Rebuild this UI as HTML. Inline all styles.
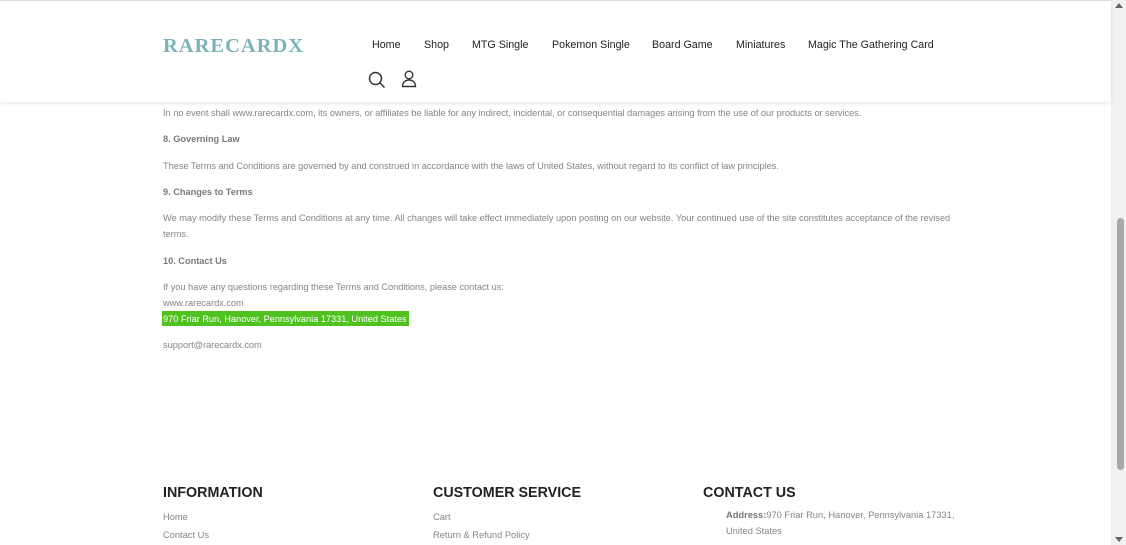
<!DOCTYPE html>
<html><head><meta charset="utf-8"><style>
*{margin:0;padding:0;box-sizing:border-box}
html,body{width:1126px;height:545px;overflow:hidden;background:#fff;font-family:"Liberation Sans",sans-serif}
.hdr{position:absolute;left:0;top:0;width:1111px;height:102px;background:#fff;box-shadow:0 2px 4px rgba(0,0,0,.08);border-top:1px solid #ddd;z-index:2}
.logo{position:absolute;left:163px;top:34px;font-family:"Liberation Serif",serif;font-size:20.5px;letter-spacing:1px;color:#7bb3ba;font-weight:bold}
.nav{position:absolute;top:38px;font-size:10.7px;color:#222}
.t{position:absolute;left:163px;font-size:9.25px;color:#858585;white-space:nowrap;letter-spacing:-.03px}
.b{font-weight:bold;color:#7a7a7a}
.hl{background:#4fc21f;color:#fff;padding:3px 2px 2px 1px;left:162px}
.fh{position:absolute;top:485px;font-size:14.3px;font-weight:bold;color:#222}
.fl{position:absolute;font-size:9.3px;color:#858585}
.sb{position:absolute;left:1111px;top:0;width:15px;height:545px;background:#f1f1f1}
.th{position:absolute;left:1117px;top:218px;width:7px;height:252px;background:#a8a8a8;border-radius:4px}
</style></head><body>
<div class="hdr">
<div class="logo">RARECARDX</div>
<div class="nav" style="left:372px">Home</div>
<div class="nav" style="left:424px">Shop</div>
<div class="nav" style="left:472px">MTG Single</div>
<div class="nav" style="left:552px">Pokemon Single</div>
<div class="nav" style="left:652px">Board Game</div>
<div class="nav" style="left:736px">Miniatures</div>
<div class="nav" style="left:808px">Magic The Gathering Card</div>
<svg style="position:absolute;left:368px;top:70px" width="18" height="18" viewBox="0 0 18 18" fill="none" stroke="#333" stroke-width="1.5"><circle cx="7.5" cy="7.5" r="6"/><path d="M12 12l4.5 4.5"/></svg>
<svg style="position:absolute;left:401px;top:69px" width="16" height="18" viewBox="0 0 16 18" fill="none" stroke="#333" stroke-width="1.4"><circle cx="8" cy="5" r="3.8"/><path d="M1.5 16.5c0-4 3-6.5 6.5-6.5s6.5 2.5 6.5 6.5z"/></svg>
</div>
<div class="t" style="top:108px">In no event shall www.rarecardx.com, its owners, or affiliates be liable for any indirect, incidental, or consequential damages arising from the use of our products or services.</div>
<div class="t b" style="top:134px">8. Governing Law</div>
<div class="t" style="top:161px">These Terms and Conditions are governed by and construed in accordance with the laws of United States, without regard to its conflict of law principles.</div>
<div class="t b" style="top:187px">9. Changes to Terms</div>
<div class="t" style="top:213px">We may modify these Terms and Conditions at any time. All changes will take effect immediately upon posting on our website. Your continued use of the site constitutes acceptance of the revised</div>
<div class="t" style="top:229px">terms.</div>
<div class="t b" style="top:256px">10. Contact Us</div>
<div class="t" style="top:282px">If you have any questions regarding these Terms and Conditions, please contact us:</div>
<div class="t" style="top:298px">www.rarecardx.com</div>
<div class="t hl" style="top:311px">970 Friar Run, Hanover, Pennsylvania 17331, United States</div>
<div class="t" style="top:340px">support@rarecardx.com</div>
<div class="fh" style="left:163px">INFORMATION</div>
<div class="fh" style="left:433px">CUSTOMER SERVICE</div>
<div class="fh" style="left:703px">CONTACT US</div>
<div class="fl" style="left:163px;top:512px">Home</div>
<div class="fl" style="left:163px;top:530px">Contact Us</div>
<div class="fl" style="left:433px;top:512px">Cart</div>
<div class="fl" style="left:433px;top:530px">Return &amp; Refund Policy</div>
<div class="fl" style="left:726px;top:510px"><b style="color:#777">Address:</b>970 Friar Run, Hanover, Pennsylvania 17331,</div>
<div class="fl" style="left:726px;top:526px">United States</div>
<div class="sb"></div><div class="th"></div>
<div style="position:absolute;left:1115px;top:3px;width:0;height:0;border-left:4px solid transparent;border-right:4px solid transparent;border-bottom:5px solid #666"></div>
<div style="position:absolute;left:1115px;top:537px;width:0;height:0;border-left:4px solid transparent;border-right:4px solid transparent;border-top:5px solid #666"></div>
</body></html>
